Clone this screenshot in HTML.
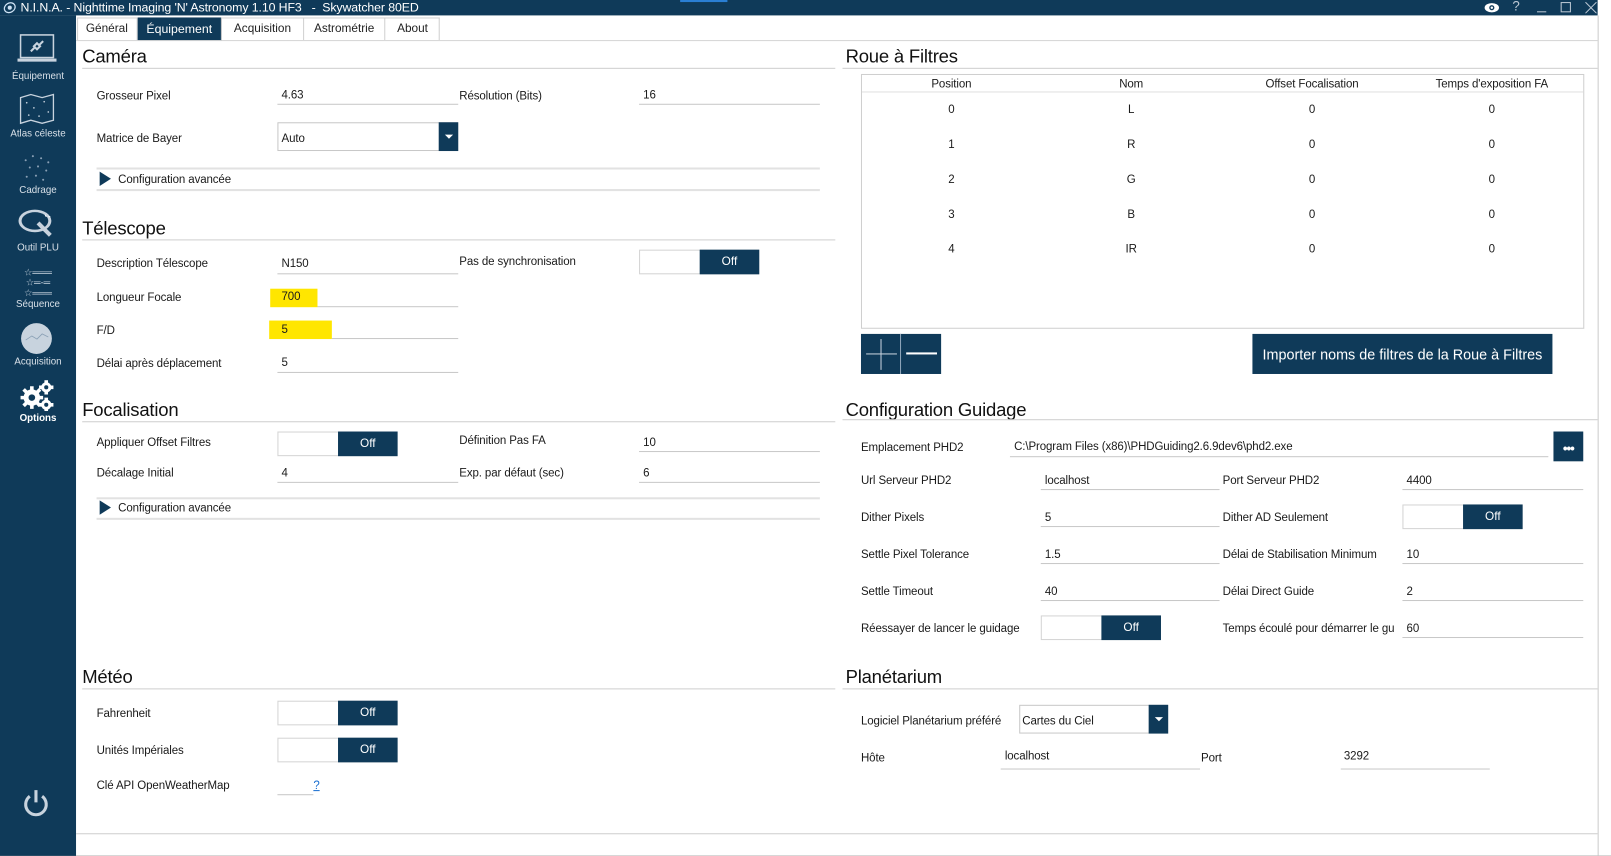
<!DOCTYPE html>
<html><head><meta charset="utf-8">
<style>
*{margin:0;padding:0;box-sizing:border-box}
html,body{width:1611px;height:855px;overflow:hidden;background:#000}
#s{position:absolute;left:0;top:0;width:1568px;height:833px;transform:scale(1.02742);transform-origin:0 0;background:#fff;font-family:"Liberation Sans",sans-serif;color:#1a1a1a}
.a{position:absolute}
.t{position:absolute;font-size:11.2px;line-height:16px;white-space:nowrap;letter-spacing:-0.1px;margin-top:1px}
.h{position:absolute;font-size:18px;line-height:22px;white-space:nowrap;color:#111;letter-spacing:-0.2px;margin-top:1px}
.l{position:absolute;height:1px;background:#cfcfcf}
.u{position:absolute;height:1px;background:#c8c8c8}
.nv{background:#0f3a59}
.tg{position:absolute;width:117px;height:24px;border:1px solid #d4d4d4;background:#fff}
.tg div{position:absolute;right:-1px;top:-1px;width:58px;height:24px;background:#0f3a59;color:#fff;font-size:11.5px;line-height:25px;text-align:center}
.sb{position:absolute;left:0;width:74px;text-align:center;color:#d8e0e8;font-size:9.5px;line-height:12px;margin-top:2px}
.tab{position:absolute;top:17px;height:22px;font-size:11.5px;line-height:23px;text-align:center;border-right:1px solid #d0d0d0;color:#222}
.tri{position:absolute;width:0;height:0;border-top:7px solid transparent;border-bottom:7px solid transparent;border-left:11px solid #0f3a59}
</style></head><body>
<div id="s">
<div class="a nv" style="left:0;top:0;width:1555px;height:15px"></div>
<div class="a" style="left:662px;top:0;width:46px;height:2px;background:#2a7fd4"></div>
<svg class="a" style="left:3px;top:1px" width="13" height="13" viewBox="0 0 13 13"><ellipse cx="6.5" cy="6.5" rx="5.5" ry="4.5" fill="none" stroke="#cfe3f5" stroke-width="1.2" transform="rotate(-30 6.5 6.5)"/><circle cx="6.5" cy="6.5" r="2" fill="#cfe3f5"/></svg>
<div class="t" style="left:20px;top:-2px;color:#fff;font-size:12px">N.I.N.A. - Nighttime Imaging 'N' Astronomy 1.10 HF3 &nbsp; - &nbsp;Skywatcher 80ED</div>
<svg class="a" style="left:1444px;top:2px" width="16" height="11" viewBox="0 0 16 11"><ellipse cx="8" cy="5.5" rx="7" ry="4.5" fill="#fff"/><circle cx="8" cy="5.5" r="2.5" fill="#0f3a59"/><circle cx="8" cy="5.5" r="1.2" fill="#fff"/></svg>
<div class="t" style="left:1472px;top:-3px;color:#bcc8d4;font-size:13px">?</div>
<div class="a" style="left:1496px;top:11px;width:9px;height:1px;background:#bcc8d4"></div>
<div class="a" style="left:1519px;top:2px;width:10px;height:10px;border:1px solid #bcc8d4"></div>
<svg class="a" style="left:1543px;top:2px" width="11" height="11"><path d="M0 0L11 11M11 0L0 11" stroke="#bcc8d4" stroke-width="1"/></svg>
<div class="a nv" style="left:0;top:15px;width:74px;height:818px"></div>
<svg class="a" style="left:17px;top:33px" width="38" height="28" viewBox="0 0 38 28"><rect x="3" y="1" width="32" height="22" fill="#0f3a59" stroke="#c8d3de" stroke-width="1.5"/><rect x="0" y="24" width="38" height="3" fill="#c8d3de"/><path d="M13 17l4-4M21 11l4-4M16 12l3 3 3-3-3-3z" stroke="#c8d3de" stroke-width="2" fill="none"/></svg>
<div class="sb" style="top:67px">Équipement</div>
<svg class="a" style="left:19px;top:91px" width="34" height="30" viewBox="0 0 34 30"><path d="M1 4l10-3 11 3 11-3v25l-11 3-11-3-10 3z" fill="none" stroke="#c8d3de" stroke-width="1.3"/><g fill="#c8d3de"><circle cx="7" cy="9" r=".8"/><circle cx="14" cy="14" r=".8"/><circle cx="24" cy="8" r=".8"/><circle cx="28" cy="18" r=".8"/><circle cx="9" cy="21" r=".8"/><circle cx="19" cy="22" r=".8"/></g></svg>
<div class="sb" style="top:123px">Atlas céleste</div>
<svg class="a" style="left:20px;top:148px" width="32" height="30" viewBox="0 0 32 30"><g fill="#8aa0b5"><circle cx="5" cy="8" r="1"/><circle cx="12" cy="4" r="1"/><circle cx="20" cy="6" r="1"/><circle cx="27" cy="10" r="1"/><circle cx="9" cy="15" r="1"/><circle cx="17" cy="14" r="1"/><circle cx="25" cy="18" r="1"/><circle cx="6" cy="24" r="1"/><circle cx="15" cy="23" r="1"/><circle cx="22" cy="27" r="1"/></g></svg>
<div class="sb" style="top:178px">Cadrage</div>
<svg class="a" style="left:17px;top:203px" width="38" height="30" viewBox="0 0 38 30"><ellipse cx="17" cy="12" rx="16" ry="11" fill="#c8d3de"/><ellipse cx="17" cy="12" rx="13" ry="8.5" fill="#0f3a59"/><path d="M20 14l12 12" stroke="#c8d3de" stroke-width="4"/><path d="M27 6l1 2M30 8h2" stroke="#fff"/></svg>
<div class="sb" style="top:234px">Outil PLU</div>
<div class="sb" style="top:258px;font-size:9px;line-height:10px;color:#c8d3de">☆═══<br>☆═-═<br>☆═══</div>
<div class="sb" style="top:289px">Séquence</div>
<svg class="a" style="left:20px;top:314px" width="31" height="31"><circle cx="15.5" cy="15.5" r="15" fill="#c8d3de"/><path d="M5 17l6-4 5 3 5-5 6 3" stroke="#8aa0b5" fill="none" stroke-width=".8"/></svg>
<div class="sb" style="top:345px">Acquisition</div>
<svg class="a" style="left:19px;top:370px" width="34" height="30" viewBox="0 0 34 30"><g fill="#fff"><circle cx="12" cy="17" r="8"/><circle cx="26" cy="7" r="5"/><circle cx="26" cy="24" r="5"/></g><g stroke="#fff" stroke-width="3.5"><path d="M12 6v22M1 17h22M4 9l16 16M20 9L4 25"/><path d="M26 0v14M19 7h14M26 17v14M19 24h14"/></g><g fill="#0f3a59"><circle cx="12" cy="17" r="3.2"/><circle cx="26" cy="7" r="2"/><circle cx="26" cy="24" r="2"/></g></svg>
<div class="sb" style="top:400px;color:#fff;font-weight:bold">Options</div>
<svg class="a" style="left:22px;top:768px" width="26" height="28" viewBox="0 0 26 28"><path d="M7 7A10 10 0 1 0 19 7" fill="none" stroke="#c8d3de" stroke-width="3"/><path d="M13 1v12" stroke="#c8d3de" stroke-width="3"/></svg>
<div class="l" style="left:74px;top:39px;width:1481px;background:#d6d6d6"></div>
<div class="a" style="left:75px;top:17px;width:353px;height:22px;border:1px solid #d0d0d0;border-bottom:none"></div>
<div class="tab" style="left:75px;width:59px">Général</div>
<div class="tab nv" style="left:134px;width:82px;color:#fff;font-size:12px">Équipement</div>
<div class="tab" style="left:216px;width:80px">Acquisition</div>
<div class="tab" style="left:296px;width:79px">Astrométrie</div>
<div class="tab" style="left:375px;width:53px;border-right:none">About</div>
<div class="a" style="left:1555px;top:15px;width:1px;height:818px;background:#ccc"></div>

<div class="h" style="left:80px;top:43px">Caméra</div>
<div class="l" style="left:80px;top:66px;width:733px"></div>
<div class="t" style="left:94px;top:85px">Grosseur Pixel</div>
<div class="t" style="left:274px;top:84px">4.63</div><div class="u" style="left:270px;top:101px;width:176px"></div>
<div class="t" style="left:447px;top:85px">Résolution (Bits)</div>
<div class="t" style="left:626px;top:84px">16</div><div class="u" style="left:622px;top:101px;width:176px"></div>
<div class="t" style="left:94px;top:126px">Matrice de Bayer</div>
<div class="a" style="left:270px;top:119px;width:176px;height:28px;border:1px solid #c8c8c8"></div>
<div class="t" style="left:274px;top:126px">Auto</div>
<div class="a nv" style="left:427px;top:119px;width:19px;height:28px"></div>
<div class="a" style="left:433px;top:131px;border-left:4px solid transparent;border-right:4px solid transparent;border-top:4px solid #fff"></div>
<div class="l" style="left:94px;top:163px;width:704px;height:2px;background:#e2e2e2"></div>
<div class="tri" style="left:97px;top:167px"></div>
<div class="t" style="left:115px;top:166px">Configuration avancée</div>
<div class="l" style="left:94px;top:184px;width:704px;height:2px;background:#e2e2e2"></div>

<div class="h" style="left:80px;top:210px">Télescope</div>
<div class="l" style="left:80px;top:233px;width:733px"></div>
<div class="t" style="left:94px;top:248px">Description Télescope</div>
<div class="t" style="left:274px;top:248px">N150</div><div class="u" style="left:270px;top:266px;width:176px"></div>
<div class="t" style="left:447px;top:246px">Pas de synchronisation</div>
<div class="tg" style="left:622px;top:243px"><div>Off</div></div>
<div class="t" style="left:94px;top:281px">Longueur Focale</div>
<div class="a" style="left:263px;top:281px;width:46px;height:18px;background:#ffe600"></div>
<div class="t" style="left:274px;top:280px">700</div><div class="u" style="left:309px;top:298px;width:137px"></div>
<div class="t" style="left:94px;top:313px">F/D</div>
<div class="a" style="left:262px;top:312px;width:61px;height:18px;background:#ffe600"></div>
<div class="t" style="left:274px;top:312px">5</div><div class="u" style="left:323px;top:329px;width:123px"></div>
<div class="t" style="left:94px;top:345px">Délai après déplacement</div>
<div class="t" style="left:274px;top:344px">5</div><div class="u" style="left:270px;top:362px;width:176px"></div>

<div class="h" style="left:80px;top:387px">Focalisation</div>
<div class="l" style="left:80px;top:410px;width:733px"></div>
<div class="t" style="left:94px;top:422px">Appliquer Offset Filtres</div>
<div class="tg" style="left:270px;top:420px"><div>Off</div></div>
<div class="t" style="left:447px;top:420px">Définition Pas FA</div>
<div class="t" style="left:626px;top:422px">10</div><div class="u" style="left:622px;top:439px;width:176px"></div>
<div class="t" style="left:94px;top:452px">Décalage Initial</div>
<div class="t" style="left:274px;top:452px">4</div><div class="u" style="left:270px;top:469px;width:176px"></div>
<div class="t" style="left:447px;top:452px">Exp. par défaut (sec)</div>
<div class="t" style="left:626px;top:452px">6</div><div class="u" style="left:622px;top:469px;width:176px"></div>
<div class="l" style="left:94px;top:484px;width:704px;height:2px;background:#e2e2e2"></div>
<div class="tri" style="left:97px;top:487px"></div>
<div class="t" style="left:115px;top:486px">Configuration avancée</div>
<div class="l" style="left:94px;top:504px;width:704px;height:2px;background:#e2e2e2"></div>

<div class="h" style="left:80px;top:647px">Météo</div>
<div class="l" style="left:80px;top:670px;width:733px"></div>
<div class="t" style="left:94px;top:686px">Fahrenheit</div>
<div class="tg" style="left:270px;top:682px"><div>Off</div></div>
<div class="t" style="left:94px;top:722px">Unités Impériales</div>
<div class="tg" style="left:270px;top:718px"><div>Off</div></div>
<div class="t" style="left:94px;top:756px">Clé API OpenWeatherMap</div>
<div class="u" style="left:270px;top:773px;width:35px"></div>
<div class="t" style="left:305px;top:756px;color:#1a6fd0;text-decoration:underline">?</div>
<div class="l" style="left:74px;top:811px;width:1481px"></div>

<div class="h" style="left:823px;top:43px">Roue à Filtres</div>
<div class="l" style="left:820px;top:66px;width:735px"></div>
<div class="a" style="left:838px;top:72px;width:704px;height:248px;border:1px solid #cfcfcf"></div>
<div class="l" style="left:839px;top:89px;width:702px;background:#e0e0e0"></div>
<div class="t" style="left:838px;top:73px;width:176px;text-align:center">Position</div>
<div class="t" style="left:1013px;top:73px;width:176px;text-align:center">Nom</div>
<div class="t" style="left:1189px;top:73px;width:176px;text-align:center">Offset Focalisation</div>
<div class="t" style="left:1364px;top:73px;width:176px;text-align:center">Temps d'exposition FA</div>
<div class="t" style="left:896px;top:89px;width:60px;text-align:center;line-height:34px">0<br>1<br>2<br>3<br>4</div>
<div class="t" style="left:1071px;top:89px;width:60px;text-align:center;line-height:34px">L<br>R<br>G<br>B<br>IR</div>
<div class="t" style="left:1247px;top:89px;width:60px;text-align:center;line-height:34px">0<br>0<br>0<br>0<br>0</div>
<div class="t" style="left:1422px;top:89px;width:60px;text-align:center;line-height:34px">0<br>0<br>0<br>0<br>0</div>
<div class="a nv" style="left:838px;top:325px;width:78px;height:39px"></div>
<div class="a" style="left:876px;top:325px;width:1px;height:39px;background:#8fa5ba"></div>
<div class="a" style="left:843px;top:344px;width:30px;height:1px;background:#c8d3de"></div>
<div class="a" style="left:857px;top:330px;width:1px;height:30px;background:#c8d3de"></div>
<div class="a" style="left:882px;top:343px;width:30px;height:2px;background:#fff"></div>
<div class="a nv" style="left:1219px;top:325px;width:292px;height:39px;color:#fff;font-size:14px;line-height:41px;text-align:center">Importer noms de filtres de la Roue à Filtres</div>

<div class="h" style="left:823px;top:387px">Configuration Guidage</div>
<div class="l" style="left:820px;top:408px;width:735px"></div>
<div class="t" style="left:838px;top:427px">Emplacement PHD2</div>
<div class="t" style="left:987px;top:426px">C:\Program Files (x86)\PHDGuiding2.6.9dev6\phd2.exe</div>
<div class="u" style="left:983px;top:444px;width:524px"></div>
<div class="a nv" style="left:1512px;top:420px;width:29px;height:29px"></div>
<div class="t" style="left:1512px;top:428px;width:29px;text-align:center;color:#fff;font-weight:bold;font-size:13px;letter-spacing:-1px">•••</div>
<div class="t" style="left:838px;top:459px">Url Serveur PHD2</div>
<div class="t" style="left:1017px;top:459px">localhost</div><div class="u" style="left:1013px;top:476px;width:174px"></div>
<div class="t" style="left:1190px;top:459px">Port Serveur PHD2</div>
<div class="t" style="left:1369px;top:459px">4400</div><div class="u" style="left:1365px;top:476px;width:176px"></div>
<div class="t" style="left:838px;top:495px">Dither Pixels</div>
<div class="t" style="left:1017px;top:495px">5</div><div class="u" style="left:1013px;top:512px;width:174px"></div>
<div class="t" style="left:1190px;top:495px">Dither AD Seulement</div>
<div class="tg" style="left:1365px;top:491px"><div>Off</div></div>
<div class="t" style="left:838px;top:531px">Settle Pixel Tolerance</div>
<div class="t" style="left:1017px;top:531px">1.5</div><div class="u" style="left:1013px;top:548px;width:174px"></div>
<div class="t" style="left:1190px;top:531px">Délai de Stabilisation Minimum</div>
<div class="t" style="left:1369px;top:531px">10</div><div class="u" style="left:1365px;top:548px;width:176px"></div>
<div class="t" style="left:838px;top:567px">Settle Timeout</div>
<div class="t" style="left:1017px;top:567px">40</div><div class="u" style="left:1013px;top:584px;width:174px"></div>
<div class="t" style="left:1190px;top:567px">Délai Direct Guide</div>
<div class="t" style="left:1369px;top:567px">2</div><div class="u" style="left:1365px;top:584px;width:176px"></div>
<div class="t" style="left:838px;top:603px">Réessayer de lancer le guidage</div>
<div class="tg" style="left:1013px;top:599px"><div>Off</div></div>
<div class="t" style="left:1190px;top:603px;width:176px;overflow:hidden">Temps écoulé pour démarrer le gu</div>
<div class="t" style="left:1369px;top:603px">60</div><div class="u" style="left:1365px;top:620px;width:176px"></div>

<div class="h" style="left:823px;top:647px">Planétarium</div>
<div class="l" style="left:820px;top:670px;width:735px"></div>
<div class="t" style="left:838px;top:693px">Logiciel Planétarium préféré</div>
<div class="a" style="left:992px;top:686px;width:145px;height:28px;border:1px solid #c8c8c8"></div>
<div class="t" style="left:995px;top:693px">Cartes du Ciel</div>
<div class="a nv" style="left:1118px;top:686px;width:19px;height:28px"></div>
<div class="a" style="left:1124px;top:698px;border-left:4px solid transparent;border-right:4px solid transparent;border-top:4px solid #fff"></div>
<div class="t" style="left:838px;top:729px">Hôte</div>
<div class="t" style="left:978px;top:727px">localhost</div><div class="u" style="left:974px;top:748px;width:194px"></div>
<div class="t" style="left:1169px;top:729px">Port</div>
<div class="t" style="left:1308px;top:727px">3292</div><div class="u" style="left:1305px;top:748px;width:145px"></div>
</div>
</body></html>
